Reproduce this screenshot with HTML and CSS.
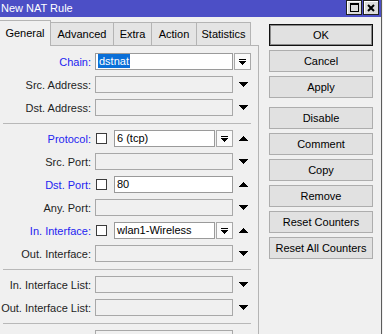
FILE: index.html
```html
<!DOCTYPE html>
<html>
<head>
<meta charset="utf-8">
<link rel="stylesheet" href="styles.css">
</head>
<body>
<div class="win">
  <div class="titlebar">
    <span class="title">New NAT Rule</span>
    <div class="tb-btns">
      <span class="tb-btn"><svg width="9" height="9" viewBox="0 0 9 9"><path d="M0 0h9v9h-9z M1 2v6h7v-6z" fill="#000" fill-rule="evenodd"/></svg></span>
      <span class="tb-btn"><svg width="8" height="8" viewBox="0 0 8 8"><path d="M1 1L7 7M7 1L1 7" stroke="#000" stroke-width="2"/></svg></span>
    </div>
  </div>
  <div class="main">
    <div class="left">
      <div class="tabs">
        <div class="tab active t-general">General</div>
        <div class="tab t-advanced">Advanced</div>
        <div class="tab t-extra">Extra</div>
        <div class="tab t-action">Action</div>
        <div class="tab t-stats">Statistics</div>
      </div>
      <div class="panel">
        <div class="row">
          <span class="lbl blue">Chain:</span>
          <span class="inp on"><span class="sel">dstnat</span></span>
          <span class="dd"><svg width="7" height="6" viewBox="0 0 7 6"><rect x="0" y="0" width="7" height="1"/><rect x="0" y="2" width="7" height="1"/><rect x="1" y="3" width="5" height="1"/><rect x="2" y="4" width="3" height="1"/><rect x="3" y="5" width="1" height="1"/></svg></span>
        </div>
        <div class="row">
          <span class="lbl">Src. Address:</span>
          <span class="inp"></span>
          <span class="arr"><svg width="9" height="5" viewBox="0 0 9 5"><rect x="0" y="0" width="9" height="1"/><rect x="1" y="1" width="7" height="1"/><rect x="2" y="2" width="5" height="1"/><rect x="3" y="3" width="3" height="1"/><rect x="4" y="4" width="1" height="1"/></svg></span>
        </div>
        <div class="row">
          <span class="lbl">Dst. Address:</span>
          <span class="inp"></span>
          <span class="arr"><svg width="9" height="5" viewBox="0 0 9 5"><rect x="0" y="0" width="9" height="1"/><rect x="1" y="1" width="7" height="1"/><rect x="2" y="2" width="5" height="1"/><rect x="3" y="3" width="3" height="1"/><rect x="4" y="4" width="1" height="1"/></svg></span>
        </div>
        <div class="sep"></div>
        <div class="row">
          <span class="lbl blue">Protocol:</span>
          <span class="cb"></span>
          <span class="inp on short">6 (tcp)</span>
          <span class="dd"><svg width="7" height="6" viewBox="0 0 7 6"><rect x="0" y="0" width="7" height="1"/><rect x="0" y="2" width="7" height="1"/><rect x="1" y="3" width="5" height="1"/><rect x="2" y="4" width="3" height="1"/><rect x="3" y="5" width="1" height="1"/></svg></span>
          <span class="arr"><svg width="9" height="5" viewBox="0 0 9 5"><rect x="4" y="0" width="1" height="1"/><rect x="3" y="1" width="3" height="1"/><rect x="2" y="2" width="5" height="1"/><rect x="1" y="3" width="7" height="1"/><rect x="0" y="4" width="9" height="1"/></svg></span>
        </div>
        <div class="row">
          <span class="lbl">Src. Port:</span>
          <span class="inp"></span>
          <span class="arr"><svg width="9" height="5" viewBox="0 0 9 5"><rect x="0" y="0" width="9" height="1"/><rect x="1" y="1" width="7" height="1"/><rect x="2" y="2" width="5" height="1"/><rect x="3" y="3" width="3" height="1"/><rect x="4" y="4" width="1" height="1"/></svg></span>
        </div>
        <div class="row">
          <span class="lbl blue">Dst. Port:</span>
          <span class="cb"></span>
          <span class="inp on mid">80</span>
          <span class="arr"><svg width="9" height="5" viewBox="0 0 9 5"><rect x="4" y="0" width="1" height="1"/><rect x="3" y="1" width="3" height="1"/><rect x="2" y="2" width="5" height="1"/><rect x="1" y="3" width="7" height="1"/><rect x="0" y="4" width="9" height="1"/></svg></span>
        </div>
        <div class="row">
          <span class="lbl">Any. Port:</span>
          <span class="inp"></span>
          <span class="arr"><svg width="9" height="5" viewBox="0 0 9 5"><rect x="0" y="0" width="9" height="1"/><rect x="1" y="1" width="7" height="1"/><rect x="2" y="2" width="5" height="1"/><rect x="3" y="3" width="3" height="1"/><rect x="4" y="4" width="1" height="1"/></svg></span>
        </div>
        <div class="row">
          <span class="lbl blue">In. Interface:</span>
          <span class="cb"></span>
          <span class="inp on short">wlan1-Wireless</span>
          <span class="dd"><svg width="7" height="6" viewBox="0 0 7 6"><rect x="0" y="0" width="7" height="1"/><rect x="0" y="2" width="7" height="1"/><rect x="1" y="3" width="5" height="1"/><rect x="2" y="4" width="3" height="1"/><rect x="3" y="5" width="1" height="1"/></svg></span>
          <span class="arr"><svg width="9" height="5" viewBox="0 0 9 5"><rect x="4" y="0" width="1" height="1"/><rect x="3" y="1" width="3" height="1"/><rect x="2" y="2" width="5" height="1"/><rect x="1" y="3" width="7" height="1"/><rect x="0" y="4" width="9" height="1"/></svg></span>
        </div>
        <div class="row">
          <span class="lbl">Out. Interface:</span>
          <span class="inp"></span>
          <span class="arr"><svg width="9" height="5" viewBox="0 0 9 5"><rect x="0" y="0" width="9" height="1"/><rect x="1" y="1" width="7" height="1"/><rect x="2" y="2" width="5" height="1"/><rect x="3" y="3" width="3" height="1"/><rect x="4" y="4" width="1" height="1"/></svg></span>
        </div>
        <div class="sep"></div>
        <div class="row">
          <span class="lbl">In. Interface List:</span>
          <span class="inp"></span>
          <span class="arr"><svg width="9" height="5" viewBox="0 0 9 5"><rect x="0" y="0" width="9" height="1"/><rect x="1" y="1" width="7" height="1"/><rect x="2" y="2" width="5" height="1"/><rect x="3" y="3" width="3" height="1"/><rect x="4" y="4" width="1" height="1"/></svg></span>
        </div>
        <div class="row">
          <span class="lbl">Out. Interface List:</span>
          <span class="inp"></span>
          <span class="arr"><svg width="9" height="5" viewBox="0 0 9 5"><rect x="0" y="0" width="9" height="1"/><rect x="1" y="1" width="7" height="1"/><rect x="2" y="2" width="5" height="1"/><rect x="3" y="3" width="3" height="1"/><rect x="4" y="4" width="1" height="1"/></svg></span>
        </div>
        <div class="sep"></div>
        <div class="row">
          <span class="lbl"></span>
          <span class="inp"></span>
        </div>
      </div>
    </div>
    <div class="btns">
      <div class="btn default">OK</div>
      <div class="btn">Cancel</div>
      <div class="btn">Apply</div>
      <div class="btn spaced">Disable</div>
      <div class="btn">Comment</div>
      <div class="btn">Copy</div>
      <div class="btn">Remove</div>
      <div class="btn">Reset Counters</div>
      <div class="btn">Reset All Counters</div>
    </div>
  </div>
</div>
</body>
</html>
```

FILE: styles.css
```css
* { box-sizing: border-box; }
html, body { margin: 0; padding: 0; }
body {
  width: 383px;
  height: 334px;
  overflow: hidden;
  background: #f0f0f0;
  font-family: "Liberation Sans", Arial, sans-serif;
  font-size: 11px;
  color: #000;
}
.win {
  width: 382px;
  height: 334px;
  border-right: 1px solid #5c5c5c;
  overflow: hidden;
}
.titlebar {
  height: 17px;
  background: #4c4fc6;
  display: flex;
  justify-content: space-between;
  align-items: flex-start;
}
.title {
  color: #fff;
  font-size: 11px;
  line-height: 17px;
  padding-left: 1px;
}
.tb-btns {
  display: flex;
  gap: 1px;
  margin-right: 2px;
}
.tb-btn {
  width: 16px;
  height: 15px;
  border: 1px solid #202020;
  background: #dcdcdc;
  box-shadow: inset 1px 1px 0 #fff;
  display: flex;
  align-items: center;
  justify-content: center;
}
.main {
  display: flex;
  align-items: flex-start;
}
.left {
  margin-left: -1px;
  width: 260px;
  flex: none;
}
.tabs {
  height: 28px;
  display: flex;
  align-items: flex-end;
}
.tab {
  height: 23px;
  border: 1px solid #b4b4b4;
  border-bottom: none;
  background: #e4e4e4;
  display: flex;
  align-items: center;
  justify-content: center;
  margin-left: -1px;
  flex: none;
  color: #000;
}
.tab.active {
  height: 26px;
  margin-bottom: -1px;
  background: #f0f0f0;
  position: relative;
  z-index: 1;
  margin-left: 0;
  padding-bottom: 1px;
}
.t-general { width: 52px; }
.t-advanced { width: 64px; }
.t-extra { width: 39px; }
.t-action { width: 46px; }
.t-stats { width: 55px; }
.panel {
  height: 290px;
  border: 1px solid #b4b4b4;
  border-bottom: none;
  background: #f0f0f0;
  padding-top: 7px;
  display: flex;
  flex-direction: column;
  gap: 6px;
}
.row {
  display: flex;
  align-items: center;
  height: 17px;
  flex: none;
}
.lbl {
  width: 95px;
  padding-right: 4px;
  text-align: right;
  flex: none;
  color: #1e1e1e;
  white-space: nowrap;
}
.lbl.blue { color: #2424f0; }
.inp {
  width: 138px;
  height: 17px;
  border: 1px solid #a8a8a8;
  background: #f0f0f0;
  flex: none;
  padding-left: 2px;
  line-height: 15px;
  white-space: nowrap;
  overflow: hidden;
}
.inp.on {
  background: #fff;
  border-color: #9a9a9a;
}
.inp.short { width: 101px; margin-left: 7px; }
.inp.mid { width: 119px; margin-left: 7px; }
.sel {
  background: #0a6fd8;
  color: #fff;
  padding: 1px 1px;
}
.cb {
  width: 11px;
  height: 11px;
  margin-left: 1px;
  border: 1px solid #3c3c3c;
  background: #fff;
  flex: none;
}
.dd {
  width: 17px;
  height: 17px;
  margin-left: 1px;
  border: 1px solid #a8a8a8;
  background: #fafafa;
  display: flex;
  align-items: center;
  justify-content: center;
  flex: none;
}
.arr {
  width: 17px;
  margin-left: 1px;
  padding-left: 5px;
  display: flex;
  align-items: center;
  flex: none;
}
.sep {
  height: 1px;
  margin: 1px 7px 0 3px;
  background: #b8b8b8;
  flex: none;
}
.btns {
  margin-left: 10px;
  padding-top: 7px;
  width: 104px;
  display: flex;
  flex-direction: column;
  gap: 4px;
  flex: none;
}
.btn {
  height: 22px;
  border: 1px solid #adadad;
  background: #e1e1e1;
  display: flex;
  align-items: center;
  justify-content: center;
  white-space: nowrap;
}
.btn.default {
  border-color: #111;
  box-shadow: inset 0 0 0 1px #8a8a8a;
}
.btn.spaced { margin-top: 5px; }
```
